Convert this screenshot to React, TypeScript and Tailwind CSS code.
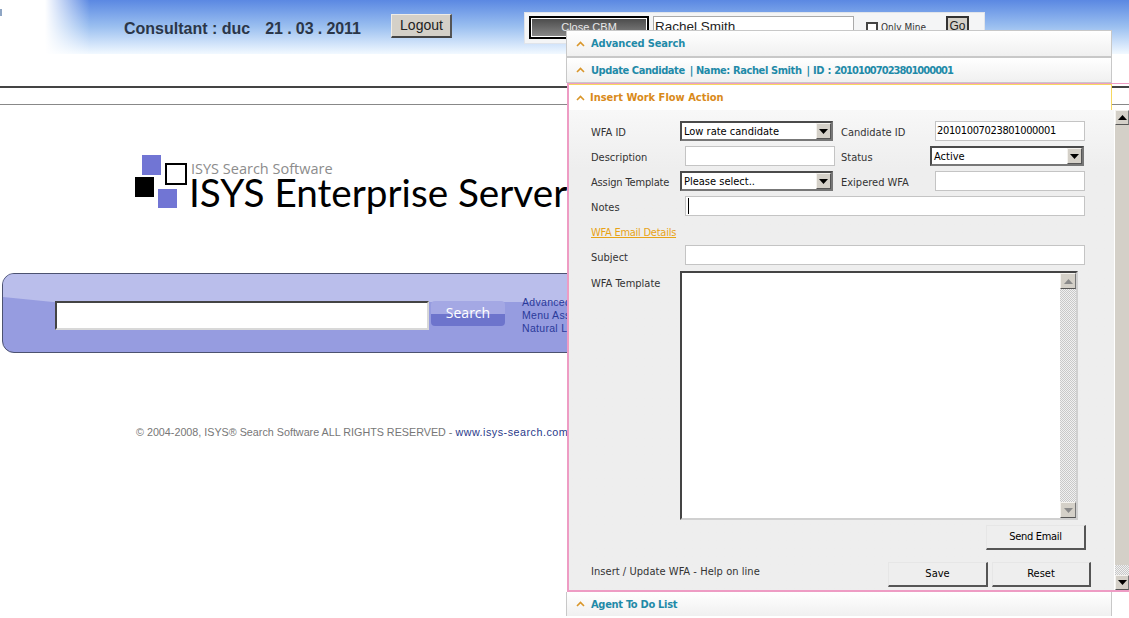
import React from "react";

const UI = "font-['DejaVu_Sans_Condensed','DejaVu_Sans',sans-serif] font-stretch-condensed";

function Chevron({ color }: { color: string }) {
  return (
    <svg width="9" height="6" viewBox="0 0 9 6" className="shrink-0">
      <path d="M1 5 L4.5 1.5 L8 5" fill="none" stroke={color} strokeWidth="1.6" />
    </svg>
  );
}

function Arrow({ down, color = "#000" }: { down?: boolean; color?: string }) {
  return (
    <svg width="9" height="5" viewBox="0 0 9 5">
      <path d={down ? "M0 0 H9 L4.5 5 Z" : "M0 5 H9 L4.5 0 Z"} fill={color} />
    </svg>
  );
}

function SectionHead({ children, className = "h-[27px]" }: { children: React.ReactNode; className?: string }) {
  return (
    <div className={`flex w-[546px] items-center gap-[6px] border border-[#c8c8c8] bg-gradient-to-b from-white to-[#f0f0f0] pl-[9px] text-[11px] font-bold text-[#1f8aa8] ${className}`}>
      <Chevron color="#d9962a" />
      <span className="whitespace-pre pt-[2px]">{children}</span>
    </div>
  );
}

function Field({ className = "" }: { className?: string }) {
  return <div className={`h-5 border border-[#c4c4c4] bg-white ${className}`} />;
}

function Select({ value, className = "" }: { value: string; className?: string }) {
  return (
    <div className={`flex h-5 items-center justify-between border-2 border-[#4a4a4a] border-b-[#777] border-r-[#777] bg-white pl-[2px] text-[11px] text-black ${className}`}>
      <span className="pt-[2px]">{value}</span>
      <span className="flex h-4 w-[15px] items-center justify-center border border-[#f4f2ee] border-b-[#555] border-r-[#555] bg-[#d4d0c8]">
        <Arrow down />
      </span>
    </div>
  );
}

function Btn({ children, className = "" }: { children: React.ReactNode; className?: string }) {
  return (
    <div className={`flex h-[25px] items-center justify-center border border-[#e6e6e6] border-b-2 border-r-2 border-b-[#555] border-r-[#555] bg-[#eeeeee] text-[11px] text-black ${className}`}>
      {children}
    </div>
  );
}

function Label({ children, className = "" }: { children: React.ReactNode; className?: string }) {
  return <div className={`shrink-0 pt-[2px] text-[11px] leading-5 text-[#333] ${className}`}>{children}</div>;
}

function ScrollBtn({ down, light }: { down?: boolean; light?: boolean }) {
  return (
    <div className={`flex items-center justify-center border border-[#f4f2ee] border-b-[#555] border-r-[#777] bg-[#d4d0c8] ${light ? "h-4 w-4" : "h-[15px] w-[14px]"}`}>
      <Arrow down={down} color={light ? "#8a8a8a" : "#000"} />
    </div>
  );
}

export default function App() {
  return (
    <div className="relative h-[618px] w-[1129px] overflow-hidden bg-white font-['Liberation_Sans',sans-serif]">
      {/* Header */}
      <div className="relative flex h-[54px] items-start bg-gradient-to-b from-[#5b88e2] via-[#9cc0f0] to-[#f2f9ff] pl-[124px]">
        <div className="absolute inset-y-0 left-0 w-[90px] bg-gradient-to-r from-white from-50% to-transparent" />
        <div className="absolute left-0 top-[9px] h-[7px] w-[2px] bg-[#8fa6c4]" />
        <div className="relative mt-[19px] w-[238px] whitespace-pre text-[16px] font-bold leading-5 text-[#2b3648]">
          Consultant : duc<span className="ml-[15px] tracking-[-0.1px]">21 . 03 . 2011</span>
        </div>
        <div className="relative ml-[29px] mt-[14px] flex h-6 w-[61px] items-center justify-center border border-[#efece6] border-b-2 border-r-2 border-b-[#444] border-r-[#555] bg-[#d4d0c8] pl-px text-[14px] text-[#222]">
          Logout
        </div>
        <div className="relative ml-[72px] mt-[12px] flex h-[32px] w-[461px] items-start border border-[#e0e4ea] bg-[#f4f5f6] pl-[4px] pt-[3px]">
          <div className="flex h-[23px] w-[120px] items-center justify-center border-2 border-black bg-gradient-to-b from-[#4a4a4a] to-[#8a8a8a] text-[11px] text-[#e8e8e8] outline outline-1 outline-white -outline-offset-3">
            Close CBM
          </div>
          <div className="ml-[4px] h-6 w-[201px] border border-[#aaa] bg-white pl-px text-[13.5px] leading-[20px] text-[#222]">
            Rachel Smith
          </div>
          <div className="ml-[12px] mt-[6px] h-[13px] w-[12px] border-2 border-[#444] bg-white" />
          <div className={`ml-[3px] mt-[4px] text-[10px] text-[#333] ${UI}`}>Only Mine</div>
          <div className="ml-[20px] flex h-[22px] w-[23px] items-center justify-center border-2 border-[#333] bg-[#d4d0c8] pb-[3px] text-[12px] text-[#222]">
            Go
          </div>
        </div>
      </div>

      {/* Rules */}
      <div className="mt-[32px] h-[2px] bg-[#444]" />
      <div className="mt-[16px] h-px bg-[#888]" />

      {/* Logo */}
      <div className="ml-[135px] mt-[50px] flex h-[54px] items-start">
        <svg width="53" height="54" viewBox="0 0 53 54" className="shrink-0">
          <rect x="7" y="0" width="19" height="20" fill="#7175d4" />
          <rect x="31" y="9" width="20" height="20" fill="#fff" stroke="#000" strokeWidth="2" />
          <rect x="0" y="22" width="19" height="20" fill="#000" />
          <rect x="23" y="34" width="19" height="19" fill="#7175d4" />
        </svg>
        <div className="ml-[3px]">
          <div className="mt-[7px] whitespace-nowrap font-['Open_Sans',sans-serif] text-[14.5px] leading-[14px] text-[#8c8c8c]">ISYS Search Software</div>
          <div className="-ml-[2px] whitespace-nowrap font-['Lato',sans-serif] text-[38.7px] leading-[32px] text-black">ISYS Enterprise Server</div>
        </div>
      </div>

      {/* Search bar */}
      <div className="relative ml-[2px] mt-[64px] flex h-[80px] w-[700px] items-start overflow-hidden rounded-[12px] border border-[#4c5270] bg-[#969ce0] pl-[52px] pt-[27px]">
        <svg width="700" height="30" viewBox="0 0 700 30" className="absolute left-0 top-0">
          <path d="M0 0 H700 V28 H50 L0 23 Z" fill="#babeeb" />
        </svg>
        <div className="relative h-[29px] w-[374px] border-2 border-[#444] border-b-[#d8d8d8] border-r-[#d8d8d8] bg-white" />
        <div className="relative ml-[2px] flex h-[25px] w-[74px] items-center justify-center rounded-[4px] bg-[linear-gradient(#a4a8e4_0,#a4a8e4_52%,#6d74cc_52%)] pb-[2px] font-['Open_Sans',sans-serif] text-[14px] text-white">
          Search
        </div>
        <div className="relative ml-[17px] -mt-[5px] text-[10.5px] leading-[13px] tracking-[0.3px] text-[#2a3a9a]">
          <div>Advanced Search</div>
          <div>Menu Assistant</div>
          <div>Natural Language</div>
        </div>
      </div>

      {/* Footer */}
      <div className="ml-[136px] mt-[72px] whitespace-nowrap text-[10.75px] leading-[14px] text-[#777]">
        © 2004-2008, ISYS® Search Software ALL RIGHTS RESERVED -{" "}
        <span className="tracking-[0.5px] text-[#2a3a8a]">www.isys-search.com</span>
      </div>

      {/* Accordion overlay */}
      <div className={`absolute left-[566px] top-[30px] flex w-[563px] flex-col ${UI}`}>
        <SectionHead><span className="tracking-[-0.15px]">Advanced Search</span></SectionHead>
        <SectionHead className="h-[26px]">
          <span className="tracking-[-0.42px]">Update Candidate</span>
          <span className="ml-[5px] tracking-[-0.4px]">| Name: Rachel Smith</span>
          <span className="ml-[5px] tracking-[-0.3px]">| ID : </span>
          <span className="tracking-[-0.95px]">20101007023801000001</span>
        </SectionHead>

        <div className="ml-px border-y border-l-2 border-y-[#ee9cc4] border-l-[#ee9cc4] border-b-2">
          <div className="flex h-[26px] w-[543px] items-center gap-[5px] border-r border-t border-[#f6d860] bg-white pl-[7px] text-[11px] font-bold text-[#d98a1a]">
            <Chevron color="#d9962a" />
            <span className="pt-[2px]">Insert Work Flow Action</span>
          </div>

          <div className="flex h-[480px]">
            <div className="flex w-[545px] flex-col bg-[#eeeeee] bg-gradient-to-b from-[#f8f8f8] from-0% to-[#eeeeee] to-[12%] pl-[22px] pt-[11px]">
              <div className="flex h-5">
                <Label className="w-[89px]">WFA ID</Label>
                <Select value="Low rate candidate" className="w-[153px]" />
                <Label className="ml-[8px] w-[94px]">Candidate ID</Label>
                <div className="h-5 w-[150px] border border-[#c4c4c4] bg-white pl-px text-[11px] leading-[18px] tracking-[-0.35px] text-black">
                  20101007023801000001
                </div>
              </div>
              <div className="mt-[5px] flex h-5">
                <Label className="w-[94px]">Description</Label>
                <Field className="w-[150px]" />
                <Label className="ml-[6px] w-[89px]">Status</Label>
                <Select value="Active" className="w-[154px]" />
              </div>
              <div className="mt-[5px] flex h-5">
                <Label className="w-[89px] tracking-[-0.15px]">Assign Template</Label>
                <Select value="Please select.." className="w-[153px]" />
                <Label className="ml-[8px] w-[94px]">Exipered WFA</Label>
                <Field className="w-[150px]" />
              </div>
              <div className="mt-[5px] flex h-5">
                <Label className="w-[94px]">Notes</Label>
                <div className="flex h-5 w-[400px] items-center border border-[#c4c4c4] bg-white pl-[2px]">
                  <div className="h-4 w-px bg-black" />
                </div>
              </div>
              <div className="mt-[6px] h-5 pt-px text-[11px] leading-5 tracking-[-0.25px] text-[#e8a317] underline">WFA Email Details</div>
              <div className="mt-[3px] flex h-5">
                <Label className="w-[94px] pt-[3px]">Subject</Label>
                <Field className="w-[400px]" />
              </div>
              <div className="mt-[6px] flex">
                <Label className="w-[89px] pt-[3px]">WFA Template</Label>
                <div className="flex h-[249px] w-[398px] justify-end border-2 border-[#444] border-b-[#d0d0d0] border-r-[#d0d0d0] bg-white">
                  <div className="flex w-4 flex-col justify-between bg-[repeating-conic-gradient(#c8c8c8_0_25%,#f0f0f0_0_50%)] bg-[length:2px_2px]">
                    <ScrollBtn light />
                    <ScrollBtn light down />
                  </div>
                </div>
              </div>
              <div className="mt-[5px] flex justify-end pr-[28px]">
                <Btn className="h-6 w-[100px] tracking-[-0.3px]">Send Email</Btn>
              </div>
              <div className="mt-[12px] flex items-start">
                <div className="w-[297px] text-[11px] leading-5 tracking-[0.05px] text-[#333]">Insert / Update WFA - Help on line</div>
                <Btn className="w-[100px]">Save</Btn>
                <Btn className="ml-[4px] w-[99px]">Reset</Btn>
              </div>
            </div>
            <div className="ml-px flex w-[14px] flex-col">
              <ScrollBtn />
              <div className="flex-1 bg-[#d4d0c8]" />
              <div className="h-[10px] bg-[repeating-conic-gradient(#c8c8c8_0_25%,#f0f0f0_0_50%)] bg-[length:2px_2px]" />
              <ScrollBtn down />
            </div>
          </div>
        </div>

        <div className="flex h-[24px] w-[546px] items-center gap-[6px] border-x border-[#c8c8c8] bg-gradient-to-b from-white to-[#f0f0f0] pl-[9px] text-[11px] font-bold text-[#1f8aa8]">
          <Chevron color="#d9962a" />
          <span className="pt-[2px] tracking-[-0.3px]">Agent To Do List</span>
        </div>
      </div>
    </div>
  );
}
